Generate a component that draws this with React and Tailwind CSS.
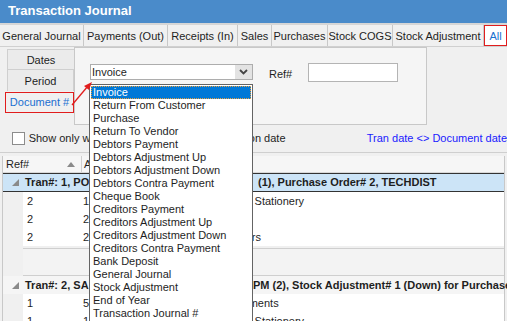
import React from 'react';

const tabs = [
  { label: 'General Journal', w: 'w-[84px]' },
  { label: 'Payments (Out)', w: 'w-[84px]' },
  { label: 'Receipts (In)', w: 'w-[70px]' },
  { label: 'Sales', w: 'w-[34px]' },
  { label: 'Purchases', w: 'w-[56px]' },
  { label: 'Stock COGS', w: 'w-[65px]' },
  { label: 'Stock Adjustment', w: 'w-[91px]' },
];

const docTypes = [
  'Invoice',
  'Return From Customer',
  'Purchase',
  'Return To Vendor',
  'Debtors Payment',
  'Debtors Adjustment Up',
  'Debtors Adjustment Down',
  'Debtors Contra Payment',
  'Cheque Book',
  'Creditors Payment',
  'Creditors Adjustment Up',
  'Creditors Adjustment Down',
  'Creditors Contra Payment',
  'Bank Deposit',
  'General Journal',
  'Stock Adjustment',
  'End of Year',
  'Transaction Journal #',
];

const group1 = [
  { ref: '2', acc: '1-2100 Inventory', desc: 'Office Stationery' },
  { ref: '2', acc: '2-1200 Payable', desc: '' },
  { ref: '2', acc: '2-1310 GST Paid', desc: 'Printers' },
];

const group2 = [
  { ref: '1', acc: '5-1100 Cost of Sales', desc: 'Documents' },
  { ref: '1', acc: '1-2100 Inventory', desc: 'Office Stationery' },
];

const Expander = () => (
  <svg width="7" height="7" viewBox="0 0 7 7" className="shrink-0">
    <polygon points="7,0 7,7 0,7" fill="#8a8a8a" />
  </svg>
);

const DataRow = ({ row }) => (
  <div className="flex h-[18px] items-center bg-white whitespace-nowrap">
    <div className="w-[59px] shrink-0 pl-[4px]">{row.ref}</div>
    <div className="w-[141px] shrink-0 pl-[1px] overflow-hidden">{row.acc}</div>
    <div>{row.desc}</div>
  </div>
);

export default function App() {
  return (
    <div
      className="relative w-[507px] h-[321px] overflow-hidden bg-[#f0f0f0] text-[11px] text-[#1e1e1e]"
      style={{ fontFamily: '"Liberation Sans", Tahoma, Arial, sans-serif' }}
    >
      {/* Title */}
      <div className="h-[25px] bg-[#4a8bca] flex items-center pl-[8px] pb-[1px] text-white font-bold text-[13px] border-b-2 border-[#d6d6d6]">
        Transaction Journal
      </div>

      {/* Tabs */}
      <div className="flex h-[22px] border-b border-[#d0d0d0]">
        {tabs.map((t) => (
          <div
            key={t.label}
            className={`${t.w} flex items-center justify-center pt-[2px] border-r border-[#c8c8c8] whitespace-nowrap`}
          >
            {t.label}
          </div>
        ))}
        <div className="w-[23px] flex items-center justify-center pt-[1px] text-[#1a6fd0] border border-[#e11d1d] bg-white">
          All
        </div>
      </div>

      {/* Filter panel */}
      <div className="flex pt-[2px] pr-[80px] h-[78px]">
        <div className="w-[74px] pl-[7px] flex flex-col">
          <div className="h-[21px] flex items-center justify-center pt-[1px] bg-[#ebebeb] border border-[#cfcfcf] border-r-0">Dates</div>
          <div className="h-[21px] flex items-center justify-center pt-[1px] bg-[#ebebeb] border-x border-[#cfcfcf]">Period</div>
          <div className="h-[21px] -ml-[2px] mt-[1px] flex items-center justify-center text-[#1a6fd0] border border-[#e11d1d]">
            Document #
          </div>
        </div>
        <div className="flex-1 -mt-[2px] bg-[#f5f5f5] border border-[#c8c8c8] flex items-start pt-[16px] pl-[15px]">
          <div className="w-[163px] h-[16px] bg-white border border-[#adadad] flex items-center">
            <span className="flex-1 pl-[1px] leading-none">Invoice</span>
            <div className="w-[17px] h-full bg-[#e3e3e3] flex items-center justify-center">
              <svg width="9" height="6" viewBox="0 0 9 6">
                <polyline points="1,1 4.5,4.5 8,1" fill="none" stroke="#444" strokeWidth="1.8" />
              </svg>
            </div>
          </div>
          <span className="ml-[16px] pt-[2px] leading-[16px]">Ref#</span>
          <div className="ml-[16px] -mt-[1px] w-[90px] h-[19px] bg-white border border-[#b4b4b4]" />
        </div>
      </div>

      {/* Options row */}
      <div className="flex items-center h-[28px] pl-[12px] border-b border-[#cfcfcf]">
        <div className="w-[13px] h-[13px] bg-white border border-[#8c8c8c]" />
        <span className="ml-[4px] w-[349px] whitespace-nowrap">Show only where document date {'<>'} transaction date</span>
        <span className="whitespace-nowrap text-[#1a1aff]">Tran date {'<>'} Document date</span>
      </div>

      {/* Grid */}
      <div className="mt-[3px] ml-[2px] mr-[2px] border-l border-r border-[#c8c8c8] bg-[#f0f0f0]">
        <div className="flex h-[17px] items-center bg-[#f6f6f6] border-b border-[#d8d8d8] whitespace-nowrap">
          <div className="w-[79px] h-full flex items-center justify-between pl-[3px] pr-[6px] border-r border-[#d0d0d0]">
            <span>Ref#</span>
            <svg width="8" height="5" viewBox="0 0 8 5">
              <polygon points="4,0 8,5 0,5" fill="#8a8a8a" />
            </svg>
          </div>
          <div className="pl-[2px]">Account</div>
        </div>

        <div className="flex h-[19px] items-center bg-[#cce4f7] border-y border-[#333] font-bold whitespace-nowrap">
          <div className="w-[20px] shrink-0 pl-[9px]"><Expander /></div>
          <span className="pl-[2px] w-[235px] shrink-0 overflow-hidden">Tran#: 1, PO 1/05/2017 10:22:51 AM</span>
          <span>(1), Purchase Order# 2, TECHDIST</span>
        </div>
        <div className="pl-[20px]">
          {group1.map((r, i) => <DataRow key={i} row={r} />)}
        </div>
        <div className="h-[28px] mt-[2px] ml-[20px] border-t border-b border-[#cfcfcf] bg-[#f3f3f3]" />

        <div className="flex h-[18px] items-center bg-[#f5f5f5] font-bold whitespace-nowrap">
          <div className="w-[20px] shrink-0 pl-[9px]"><Expander /></div>
          <span className="pl-[2px] w-[230px] shrink-0 overflow-hidden">Tran#: 2, SA 1/05/2017 10:25:07</span>
          <span>PM (2), Stock Adjustment# 1 (Down) for Purchase</span>
        </div>
        <div className="pl-[20px]">
          {group2.map((r, i) => <DataRow key={i} row={r} />)}
        </div>
      </div>

      {/* Dropdown list */}
      <div className="absolute left-[89px] top-[84px] w-[164px] h-[240px] bg-white border border-[#646464] pt-[1px] px-[1px]">
        {docTypes.map((d, i) => (
          <div
            key={d}
            className={
              i === 0
                ? 'h-[13px] leading-[11px] pl-[1px] bg-[#0078d7] text-white border border-dotted border-[#e8a040]'
                : 'h-[13px] leading-[13px] pl-[2px] whitespace-nowrap'
            }
          >
            {d}
          </div>
        ))}
      </div>

      {/* Red annotation arrow */}
      <svg className="absolute left-0 top-0 pointer-events-none" width="507" height="321">
        <line x1="72" y1="105" x2="88" y2="86" stroke="#e11d1d" strokeWidth="1.3" />
        <polygon points="92,82 84,86 89,90" fill="#e11d1d" />
      </svg>
    </div>
  );
}
